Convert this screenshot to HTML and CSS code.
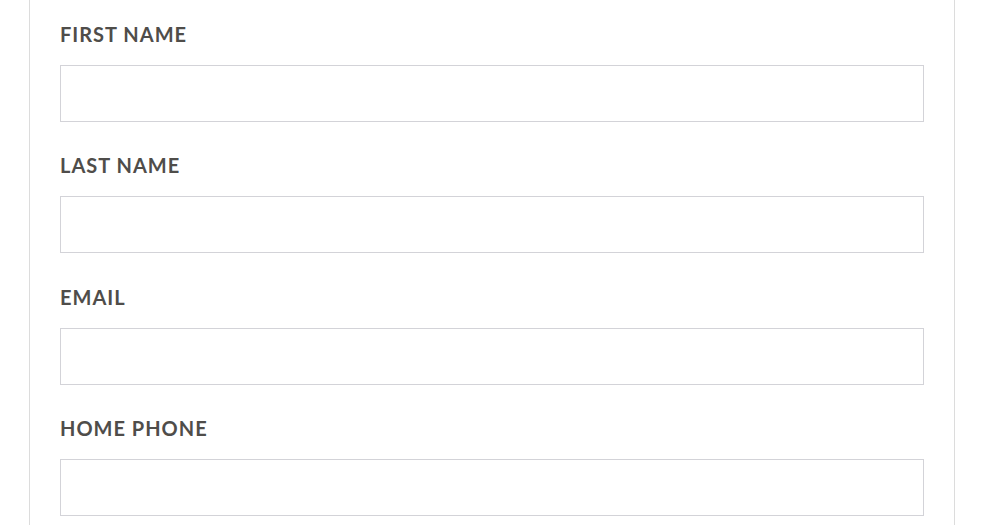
FILE: index.html
```html
<!DOCTYPE html>
<html>
<head>
<meta charset="utf-8">
<link rel="stylesheet" href="styles.css">
</head>
<body>
<div class="panel">
  <form class="form">
    <div class="field">
      <label class="label" for="fn">FIRST NAME</label>
      <input class="input" id="fn" type="text">
    </div>
    <div class="field">
      <label class="label" for="ln">LAST NAME</label>
      <input class="input" id="ln" type="text">
    </div>
    <div class="field">
      <label class="label" for="em">EMAIL</label>
      <input class="input" id="em" type="email">
    </div>
    <div class="field">
      <label class="label" for="hp">HOME PHONE</label>
      <input class="input" id="hp" type="tel">
    </div>
  </form>
</div>
</body>
</html>
```
FILE: styles.css
```css
html, body {
  margin: 0;
  padding: 0;
  background: #fff;
}
body {
  height: 525px;
  overflow: hidden;
}
.panel {
  margin-left: 29px;
  width: 926px;
  height: 525px;
  box-sizing: border-box;
  border-left: 1px solid #dcdcdc;
  border-right: 1px solid #dcdcdc;
  padding: 22px 30px 0;
}
.form {
  display: flex;
  flex-direction: column;
  gap: 31.34px;
}
.field {
  display: flex;
  flex-direction: column;
  gap: 19px;
}
.label {
  font-family: Lato, "Open Sans", sans-serif;
  font-weight: 700;
  font-size: 20px;
  line-height: 24px;
  letter-spacing: 1px;
  color: #4f4d4a;
}
.input {
  display: block;
  box-sizing: border-box;
  width: 864px;
  height: 57px;
  margin: 0;
  border: 1px solid #d3d3d8;
  border-radius: 0;
  background: #fff;
  outline: none;
}
```
